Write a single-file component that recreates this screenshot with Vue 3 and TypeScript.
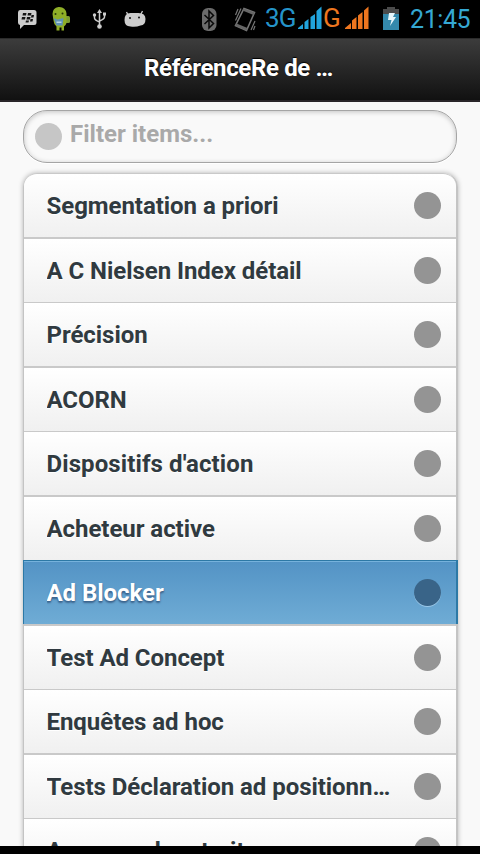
<script setup lang="ts">
interface Entry { label: string; active?: boolean }

const entries: Entry[] = [
  { label: 'Segmentation a priori' },
  { label: 'A C Nielsen Index détail' },
  { label: 'Précision' },
  { label: 'ACORN' },
  { label: "Dispositifs d'action" },
  { label: 'Acheteur active' },
  { label: 'Ad Blocker', active: true },
  { label: 'Test Ad Concept' },
  { label: 'Enquêtes ad hoc' },
  { label: 'Tests Déclaration ad positionnement' },
  { label: 'Annonce de retrait' },
]
</script>

<template>
  <div class="screen">
    <div class="status">
      <svg class="tray" width="340" height="38" viewBox="0 0 340 38">
        <!-- messenger -->
        <path fill="#cdcdcd" d="M20 10h14q2.500 0 2.500 2.500v10q0 2.500-2.500 2.500h-10l-4 4v-4q-2-.5-2-2.500v-10q0-2.500 2-2.500z" />
        <path fill="#151515" d="M23 13h3.500l-.5 2.500h-3.500zM28 13h3.500l-.5 2.500h-3.500zM22 17h3.500l-.5 2.500h-3.500zM27 17h3.500l-.5 2.500h-3.500zM31.500 15h2.500l-.5 2.500h-2.500zM30.500 19h2.500l-.5 2.500h-2.500zM26 20.500h3l-.5 2h-3z" />
        <!-- green robot -->
        <rect x="64" y="16" width="6" height="7" rx="1.500" fill="#7d9c32" />
        <path fill="#8fae27" d="M52.500 14q0-6 6-7 7-.5 8 6.500v9.500q-1 3-2.500 3.500v4h-2.500v-3h-2v3h-3v-4q-3-3-3-6z" />
        <circle cx="55.500" cy="14" r="1" fill="#26360b" /><circle cx="62.500" cy="13.500" r="1" fill="#26360b" />
        <path fill="#5f92b5" d="M53.500 18l4 1.500 6-1.500-1 7.500h-6z" /><path fill="#b7d5dd" d="M56.500 21.500h5v1.500h-5z" />
        <!-- usb -->
        <path d="M99.500 12v14M94.500 15v3q0 2 5 4M104.500 14v3q0 2-5 4" fill="none" stroke="#cdcdcd" stroke-width="1.500" />
        <path fill="#cdcdcd" d="M99.500 9l2.500 4h-5zM103 12.500h3v3h-3z" />
        <circle cx="94.500" cy="15" r="1.700" fill="#cdcdcd" /><circle cx="99.500" cy="26.500" r="2.300" fill="#cdcdcd" />
        <!-- robot head -->
        <path d="M126.500 12l2 4M142.500 11l-2 4" stroke="#cdcdcd" stroke-width="1.300" />
        <path fill="#cdcdcd" d="M124.500 20q0-7 6-7h8q7 0 7 6q0 6-5 6.500q-5 2-10 1q-6 0-6-6.500z" />
        <circle cx="130" cy="18" r="1" fill="#111" /><circle cx="139" cy="17.500" r="1" fill="#111" />
        <!-- bluetooth -->
        <rect x="202" y="8" width="14.500" height="23" rx="6" fill="#6b6b6b" />
        <path d="M204.500 15l9 8.500-4.500 4.500v-17l4.500 4.500-9 8.500" fill="none" stroke="#080808" stroke-width="1.500" />
        <!-- vibrate -->
        <g fill="none" stroke="#777">
          <path d="M244 8.500l10.500 4-8 18-11-5z" stroke-width="1.600" />
          <path d="M241 8.500l-5.500 12M238 9l-2.500 6M255 21l-4 9M255 26l-1.500 4" stroke-width="1.200" />
        </g>
        <path fill="#666" d="M243.500 8.500l11 4-1 2.500-11-4.500zM236.500 23.500l11 4.500-1 2.500-11-4.500z" />
      </svg>
      <span class="net blue">3G</span>
      <svg class="bars blue-bars" width="24" height="24" viewBox="0 0 24 24" fill="#21a3dc">
        <path d="M0 23v-1l5-4v5zM6.500 23V16l4-3v10zM12.500 23V11l4.500-3v15zM18.500 23V5l5-4.500v22.500z" />
      </svg>
      <span class="net orange">G</span>
      <svg class="bars orange-bars" width="24" height="24" viewBox="0 0 24 24" fill="#ee761f">
        <path d="M0 23v-1l6-5v6zM7 23V14.500l4.500-3.500v12zM13 23V9.500l4.500-3.500v17zM19 23V4.500l4.500-4v22.500z" />
      </svg>
      <svg class="battery" width="16" height="24" viewBox="0 0 16 24">
        <path fill="#4b4b4b" d="M4 0h8v2h4v5H0V2h4z" /><path fill="#3489ac" d="M0 7h16v16H0z" />
        <path fill="#e8f7fb" d="M6 6h6l-2 4h3l-6 9 1.500-6H5z" />
      </svg>
      <span class="clock">21:45</span>
    </div>

    <header class="bar"><h1>RéférenceRe de …</h1></header>

    <main class="content">
      <label class="search">
        <span class="dot pale"></span>
        <input type="text" placeholder="Filter items..." />
      </label>
      <ul class="list">
        <li v-for="e in entries" :key="e.label" :class="{ active: e.active }">
          <span class="label">{{ e.label }}</span>
          <span class="dot"></span>
        </li>
      </ul>
    </main>
    <div class="foot"></div>
  </div>
</template>

<style>
body { margin: 0; overflow: hidden; background: #000; }
</style>

<style scoped>
* { box-sizing: border-box; }
.screen { width: 480px; height: 854px; display: flex; flex-direction: column; overflow: hidden; background: #f9f9f9; font-family: Roboto, "Liberation Sans", sans-serif; }
.status { height: 38px; flex: none; background: #000; display: flex; align-items: flex-start; }
.tray { flex: none; margin-right: -75px; }
.net { flex: none; font-size: 26px; line-height: 37px; letter-spacing: -.8px; }
.blue { color: #2594c9; width: 33px; }
.orange { color: #ee761f; width: 21px; }
.bars { flex: none; margin-top: 6px; }
.blue-bars { margin-left: 0; margin-right: 1px; }
.orange-bars { margin-left: 1px; }
.battery { flex: none; margin: 7px 0 0 14px; }
.clock { margin-left: 11px; font-size: 25px; line-height: 40px; color: #35a8d3; letter-spacing: -.4px; white-space: nowrap; }
.bar { height: 64px; flex: none; border-top: 1px solid #2b2b2b; border-bottom: 2px solid #2a262a; background: linear-gradient(#3c3c3c, #111); text-align: center; }
h1 { margin: 0 0 0 -3px; font-size: 24px; line-height: 58px; font-weight: 700; letter-spacing: -.35px; color: #fff; text-shadow: 0 -1px 1px #000; }
.content { flex: 1; min-height: 0; overflow: hidden; padding: 8px 22px 0 23px; }
.search { height: 53px; margin-right: 1px; display: flex; align-items: center; border: 1px solid #a5a5a5; border-radius: 24px; box-shadow: inset 0 1px 5px rgba(0,0,0,.22), 0 1px 0 #fff; padding-left: 11px; }
.dot { flex: none; width: 27px; height: 27px; border-radius: 50%; background: #949494; }
.dot.pale { background: #c6c6c6; }
input { flex: 1; min-width: 0; border: 0; outline: 0; background: none; padding: 0; margin: 0 0 5px 8px; font: 700 24px/34px Roboto, sans-serif; }
input::placeholder { color: #a9a9a9; opacity: 1; }
.list { list-style: none; margin: 10px 0 0; padding: 0; border: 1px solid #c4c4c4; border-right-width: 2px; border-top: 0; border-radius: 14px 14px 0 0; box-shadow: 0 0 5px rgba(0,0,0,.28); }
li { height: 64px; display: flex; align-items: center; justify-content: space-between; border-top: 1px solid #c9c9c9; background: linear-gradient(#fff, #f0f0f0); padding: 0 15px 0 22.500px; color: #303a40; font-size: 24px; font-weight: 700; letter-spacing: -.05px; text-shadow: 0 1px 0 #fff; }
li:first-child { border-radius: 13px 13px 0 0; }
li:nth-child(even) { height: 65px; border-top-width: 2px; }
li:nth-child(5) { letter-spacing: .1px; }
.label { width: 351px; line-height: 34px; overflow: hidden; text-overflow: ellipsis; white-space: nowrap; }
li.active { position: relative; margin: 0 -2px 0 -1px; padding: 0 15px 0 22.500px; border: 1px solid #2d79a6; border-right-width: 2px; border-bottom: 0; background: linear-gradient(#5393c5, #6facd5); box-shadow: inset 0 1px 0 #76b2dc; color: #fff; text-shadow: 0 1px 1px #3e6790, 0 2px 2px #3e6790; }
li.active .dot { background: #396488; box-shadow: 0 1px 0 #9ac7e8; }
.foot { height: 8px; flex: none; background: #000; }
</style>
